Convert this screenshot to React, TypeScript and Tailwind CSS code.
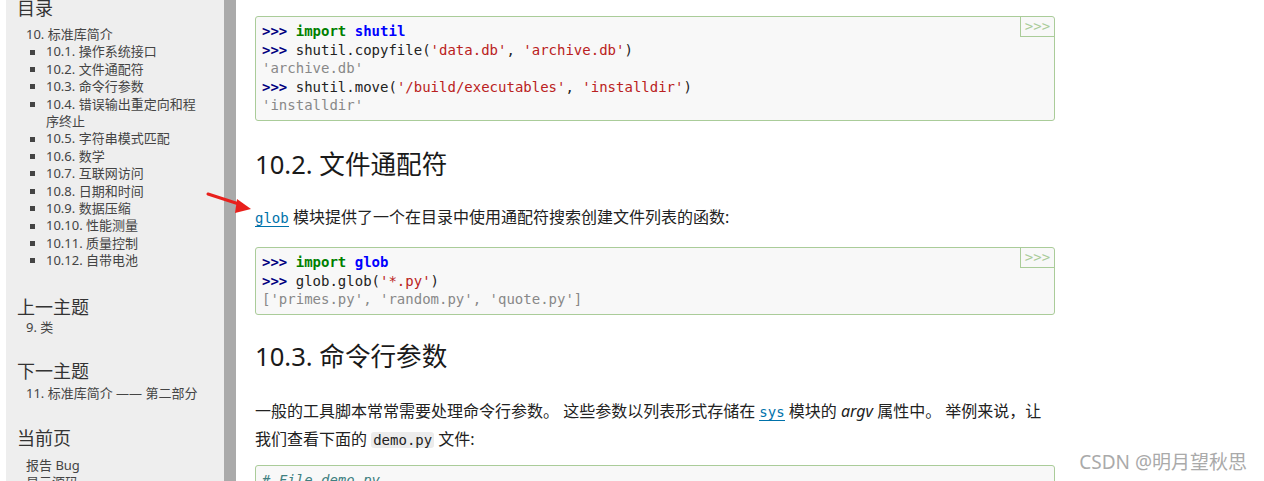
import React from "react";

const mono = "font-['DejaVu_Sans_Mono','Liberation_Mono',monospace]";

const tocItems = [
  "10.1. 操作系统接口",
  "10.2. 文件通配符",
  "10.3. 命令行参数",
  "10.4. 错误输出重定向和程序终止",
  "10.5. 字符串模式匹配",
  "10.6. 数学",
  "10.7. 互联网访问",
  "10.8. 日期和时间",
  "10.9. 数据压缩",
  "10.10. 性能测量",
  "10.11. 质量控制",
  "10.12. 自带电池",
];

const Prompt = () => <span className="font-bold text-[#000080]">&gt;&gt;&gt; </span>;
const Kw = ({ children }: { children: React.ReactNode }) => (
  <span className="font-bold text-[#008000]">{children}</span>
);
const Mod = ({ children }: { children: React.ReactNode }) => (
  <span className="font-bold text-[#0000ff]">{children}</span>
);
const Str = ({ children }: { children: React.ReactNode }) => (
  <span className="text-[#ba2121]">{children}</span>
);
const Out = ({ children }: { children: React.ReactNode }) => (
  <div className="text-[#888888]">{children}</div>
);

const CodeBox = ({ children, className = "" }: { children: React.ReactNode; className?: string }) => (
  <div
    className={`relative w-[800px] shrink-0 rounded-[3px] border border-[#aacc99] bg-[#f8f8f8] px-[6px] py-[5px] text-[14px] leading-[18.5px] text-[#222] whitespace-pre ${mono} ${className}`}
  >
    <div className="absolute right-0 top-0 flex h-[20px] w-[34px] items-center justify-center border-b border-l border-[#aacc99] text-[14px] text-[#aacc99]">
      &gt;&gt;&gt;
    </div>
    {children}
  </div>
);

const SideHead = ({ children, className = "" }: { children: React.ReactNode; className?: string }) => (
  <div className={`pl-[11px] text-[18px] leading-[24px] text-[#333] ${className}`}>{children}</div>
);

const Sidebar = () => (
  <div className="flex w-[218px] shrink-0 flex-col bg-[#eeeeee] pr-[22px] text-[13px] leading-[17.4px] text-[#444]">
    <SideHead className="-mt-[4px]">目录</SideHead>
    <div className="mt-[6px] pl-[20px]">10. 标准库简介</div>
    <ul className="flex flex-col">
      {tocItems.map((t) => (
        <li key={t} className="flex">
          <span className="flex h-[17.4px] w-[40px] shrink-0 items-center pl-[24px]">
            <span className="h-[5px] w-[5px] bg-[#444]" />
          </span>
          <span>{t}</span>
        </li>
      ))}
    </ul>
    <SideHead className="mt-[25px]">上一主题</SideHead>
    <div className="pl-[20px]">9. 类</div>
    <SideHead className="mt-[23px]">下一主题</SideHead>
    <div className="mt-[2px] pl-[20px]">11. 标准库简介 —— 第二部分</div>
    <SideHead className="mt-[23px]">当前页</SideHead>
    <div className="mt-[7px] pl-[20px]">报告 Bug</div>
    <div className="pl-[20px]">显示源码</div>
  </div>
);

export default function App() {
  return (
    <div className="relative flex h-[481px] w-[1264px] overflow-hidden bg-white font-['Noto_Sans','Noto_Sans_CJK_SC',sans-serif]">
      <div className="w-[6px] shrink-0 bg-white" />
      <Sidebar />
      <div className="w-[12px] shrink-0 bg-[#aaaaaa]" />

      <main className="flex flex-col pl-[19px] text-[16px] text-[#222]">
        <CodeBox className="mt-[16px]">
          <div>
            <Prompt />
            <Kw>import</Kw> <Mod>shutil</Mod>
          </div>
          <div>
            <Prompt />
            shutil.copyfile(<Str>'data.db'</Str>, <Str>'archive.db'</Str>)
          </div>
          <Out>'archive.db'</Out>
          <div>
            <Prompt />
            shutil.move(<Str>'/build/executables'</Str>, <Str>'installdir'</Str>)
          </div>
          <Out>'installdir'</Out>
        </CodeBox>

        <h2 className="mt-[27px] text-[25.6px] font-normal leading-[34px] text-[#1a1a1a]">10.2. 文件通配符</h2>

        <p className="mt-[22px] leading-[27px]">
          <span className={`border-b border-[#0072aa] text-[14px] text-[#0072aa] ${mono}`}>glob</span>{" "}
          模块提供了一个在目录中使用通配符搜索创建文件列表的函数:
        </p>

        <CodeBox className="mt-[15.5px]">
          <div>
            <Prompt />
            <Kw>import</Kw> <Mod>glob</Mod>
          </div>
          <div>
            <Prompt />
            glob.glob(<Str>'*.py'</Str>)
          </div>
          <Out>['primes.py', 'random.py', 'quote.py']</Out>
        </CodeBox>

        <h2 className="mt-[25px] text-[25.6px] font-normal leading-[34px] text-[#1a1a1a]">10.3. 命令行参数</h2>

        <p className="mt-[24px] w-[800px] leading-[27px]">
          一般的工具脚本常常需要处理命令行参数。 这些参数以列表形式存储在{" "}
          <span className={`border-b border-[#0072aa] text-[14px] text-[#0072aa] ${mono}`}>sys</span> 模块的{" "}
          <em>argv</em> 属性中。 举例来说，让我们查看下面的{" "}
          <span className={`rounded-[3px] bg-[#ececec] px-[2px] text-[14px] ${mono}`}>demo.py</span> 文件:
        </p>

        <div
          className={`mt-[11px] w-[800px] rounded-[3px] border border-[#aacc99] bg-[#f8f8f8] px-[6px] py-[5px] text-[14px] italic leading-[18.5px] text-[#408080] ${mono}`}
        >
          # File demo.py
        </div>
      </main>

      {/* red annotation arrow */}
      <svg className="absolute left-[200px] top-[185px]" width="60" height="35" viewBox="0 0 60 35">
        <line x1="8" y1="9" x2="42" y2="20" stroke="#e8201c" strokeWidth="3" strokeLinecap="round" />
        <polygon points="51,24 37,14 35,28" fill="#e8201c" />
      </svg>

      <div className="absolute right-[17px] top-[449px] text-[19px] leading-[26px] text-[#aaaaaa] [text-shadow:0_0_1px_#ffffff]">
        CSDN @明月望秋思
      </div>
    </div>
  );
}
